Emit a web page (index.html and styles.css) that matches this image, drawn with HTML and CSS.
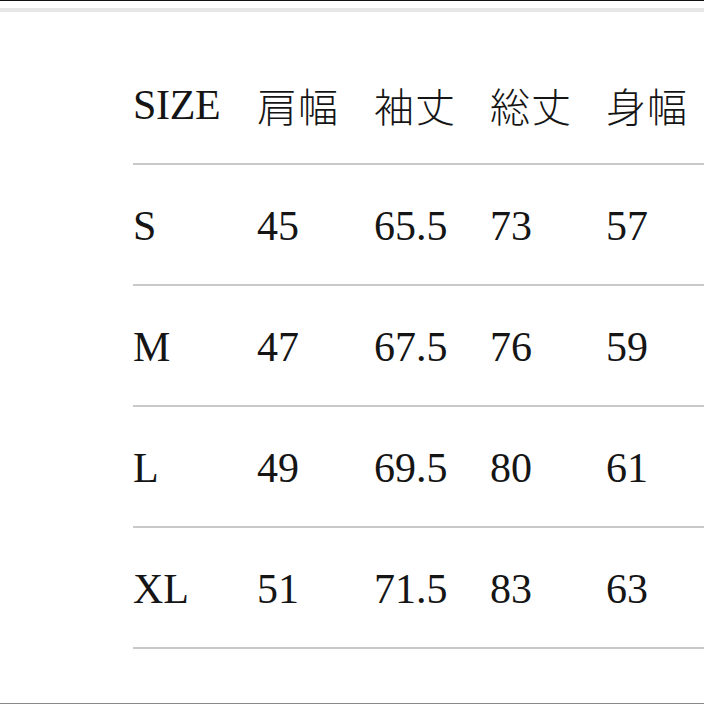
FILE: index.html
```html
<!DOCTYPE html>
<html lang="ja">
<head>
<meta charset="utf-8">
<title>サイズ表</title>
<link rel="stylesheet" href="styles.css">
</head>
<body>
<div class="frame">
  <div class="topline"></div>
  <div class="topshade"></div>
  <div class="chart">
    <div class="row head">
      <span>SIZE</span><span class="jp">肩幅</span><span class="jp">袖丈</span><span class="jp">総丈</span><span class="jp">身幅</span>
    </div>
    <div class="row"><span>S</span><span>45</span><span>65.5</span><span>73</span><span>57</span></div>
    <div class="row"><span>M</span><span>47</span><span>67.5</span><span>76</span><span>59</span></div>
    <div class="row"><span>L</span><span>49</span><span>69.5</span><span>80</span><span>61</span></div>
    <div class="row"><span>XL</span><span>51</span><span>71.5</span><span>83</span><span>63</span></div>
  </div>
  <div class="bottomline"></div>
</div>
</body>
</html>
```
FILE: styles.css
```css
html, body {
  margin: 0;
  padding: 0;
  background: #ffffff;
}
.frame {
  width: 704px;
  height: 704px;
  display: flex;
  flex-direction: column;
  overflow: hidden;
}
.topline {
  height: 1px;
  background: #111111;
}
.topshade {
  height: 4px;
  margin-top: 7px;
  background: #e6e6e6;
}
.chart {
  margin-top: 32px;
  margin-left: 133px;
  font-family: "Liberation Serif", "Noto Sans CJK JP", serif;
  font-size: 42px;
  color: #151515;
}
.row {
  display: grid;
  grid-template-columns: 124px 117px 116px 116px 1fr;
  height: 115px;
  padding-top: 4px;
  line-height: 115px;
  border-bottom: 2px solid #c9c9c9;
  white-space: nowrap;
}
.row.head span:first-child {
  letter-spacing: -0.3px;
}
.jp {
  font-family: "Noto Sans CJK JP", sans-serif;
  font-size: 40px;
  font-weight: 300;
  letter-spacing: 1px;
}
.bottomline {
  margin-top: auto;
  height: 1px;
  background: #8a8a8a;
}
```
